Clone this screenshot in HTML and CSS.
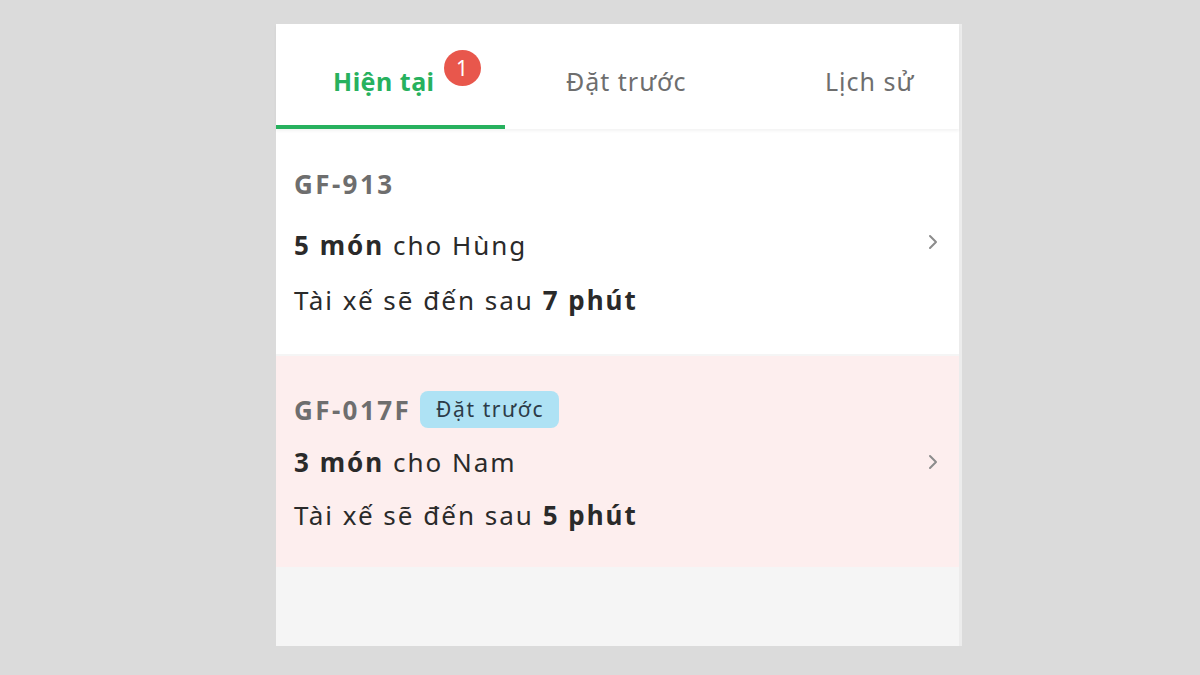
FILE: index.html
```html
<!DOCTYPE html>
<html lang="vi">
<head>
<meta charset="utf-8">
<title>Đơn hàng</title>
<link rel="stylesheet" href="styles.css">
</head>
<body>
<div class="phone">
  <nav class="tabs">
    <div class="tab tab-current active"><span class="tab-label">Hiện tại<span class="badge">1</span></span></div>
    <div class="tab tab-scheduled"><span class="tab-label">Đặt trước</span></div>
    <div class="tab tab-history"><span class="tab-label">Lịch sử</span></div>
  </nav>
  <section class="order">
    <div class="order-info">
      <div class="order-id-row order-id-row-plain"><span class="order-id">GF-913</span></div>
      <div class="order-line order-line-items"><b>5 món</b> cho Hùng</div>
      <div class="order-line order-line-eta">Tài xế sẽ đến sau <b>7 phút</b></div>
    </div>
    <svg class="chevron" width="12" height="18" viewBox="0 0 12 18"><polyline points="3,3 9,9 3,15" fill="none" stroke="#8c8c8c" stroke-width="2" stroke-linecap="round" stroke-linejoin="round"/></svg>
  </section>
  <section class="order order-scheduled">
    <div class="order-info">
      <div class="order-id-row"><span class="order-id">GF-017F</span><span class="pill">Đặt trước</span></div>
      <div class="order-line order-line-items2"><b>3 món</b> cho Nam</div>
      <div class="order-line order-line-eta2">Tài xế sẽ đến sau <b>5 phút</b></div>
    </div>
    <svg class="chevron" width="12" height="18" viewBox="0 0 12 18"><polyline points="3,3 9,9 3,15" fill="none" stroke="#8c8c8c" stroke-width="2" stroke-linecap="round" stroke-linejoin="round"/></svg>
  </section>
  <div class="filler"></div>
</div>
</body>
</html>
```

FILE: styles.css
```css
* { box-sizing: border-box; }
html, body { margin: 0; padding: 0; }
body {
  background: #dbdbdb;
  font-family: "Noto Sans", "Open Sans", sans-serif;
  padding: 24px 0 0 276px;
  height: 675px;
  overflow: hidden;
}
.phone {
  width: 686px;
  height: 622px;
  background: #f5f5f5;
  border-right: 3px solid #ececec;
  display: flex;
  flex-direction: column;
}
.tabs {
  height: 105px;
  background: #fff;
  display: grid;
  grid-template-columns: 229px 228px 226px;
  position: relative;
  z-index: 1;
  box-shadow: 0 2px 3px rgba(0,0,0,0.05);
}
.tab {
  display: flex;
  align-items: flex-start;
  padding-top: 40px;
  border-bottom: 4px solid transparent;
  font-size: 25px;
  line-height: 34px;
  letter-spacing: 1px;
  color: #6e6e6e;
}
.tab.active {
  border-bottom-color: #27b15e;
  color: #27b15e;
  font-weight: 700;
  letter-spacing: 0.5px;
}
.tab-current { padding-left: 57px; }
.tab-scheduled { padding-left: 61px; }
.tab-history { padding-left: 92px; }
.tab-label { position: relative; white-space: nowrap; }
.badge {
  position: absolute;
  left: calc(100% + 9px);
  top: -14px;
  width: 37px;
  height: 36px;
  border-radius: 50%;
  background: #e8574c;
  color: #fff;
  font-size: 21px;
  font-weight: 400;
  letter-spacing: 0;
  line-height: 36px;
  text-align: center;
}
.order {
  background: #fff;
  display: flex;
  align-items: center;
  padding: 38px 20px 37px 18px;
}
.order-scheduled {
  background: #fdeeee;
  margin-top: 2px;
  padding: 35px 20px 35px 18px;
}
.order-info {
  flex: 1;
  color: #2a2a2a;
  font-size: 26px;
  line-height: 34px;
  letter-spacing: 2px;
}
.order-id-row { display: flex; align-items: center; height: 37px; }
.order-id-row-plain { height: 34px; margin-bottom: 27px; }
.order-id { color: #6e6e6e; font-weight: 700; letter-spacing: 2.4px; }
.order-line b { font-weight: 700; }
.order-line-items { margin-bottom: 21px; }
.order-line-items2 { margin-top: 17px; margin-bottom: 19px; }
.pill {
  margin-left: 9px;
  height: 37px;
  padding: 0 15px 0 16px;
  border-radius: 8px;
  background: #aee2f4;
  color: #2c3b48;
  font-size: 21px;
  letter-spacing: 1.6px;
  line-height: 37px;
}
.chevron { flex: none; }
.filler { flex: 1; background: #f5f5f5; }
```
